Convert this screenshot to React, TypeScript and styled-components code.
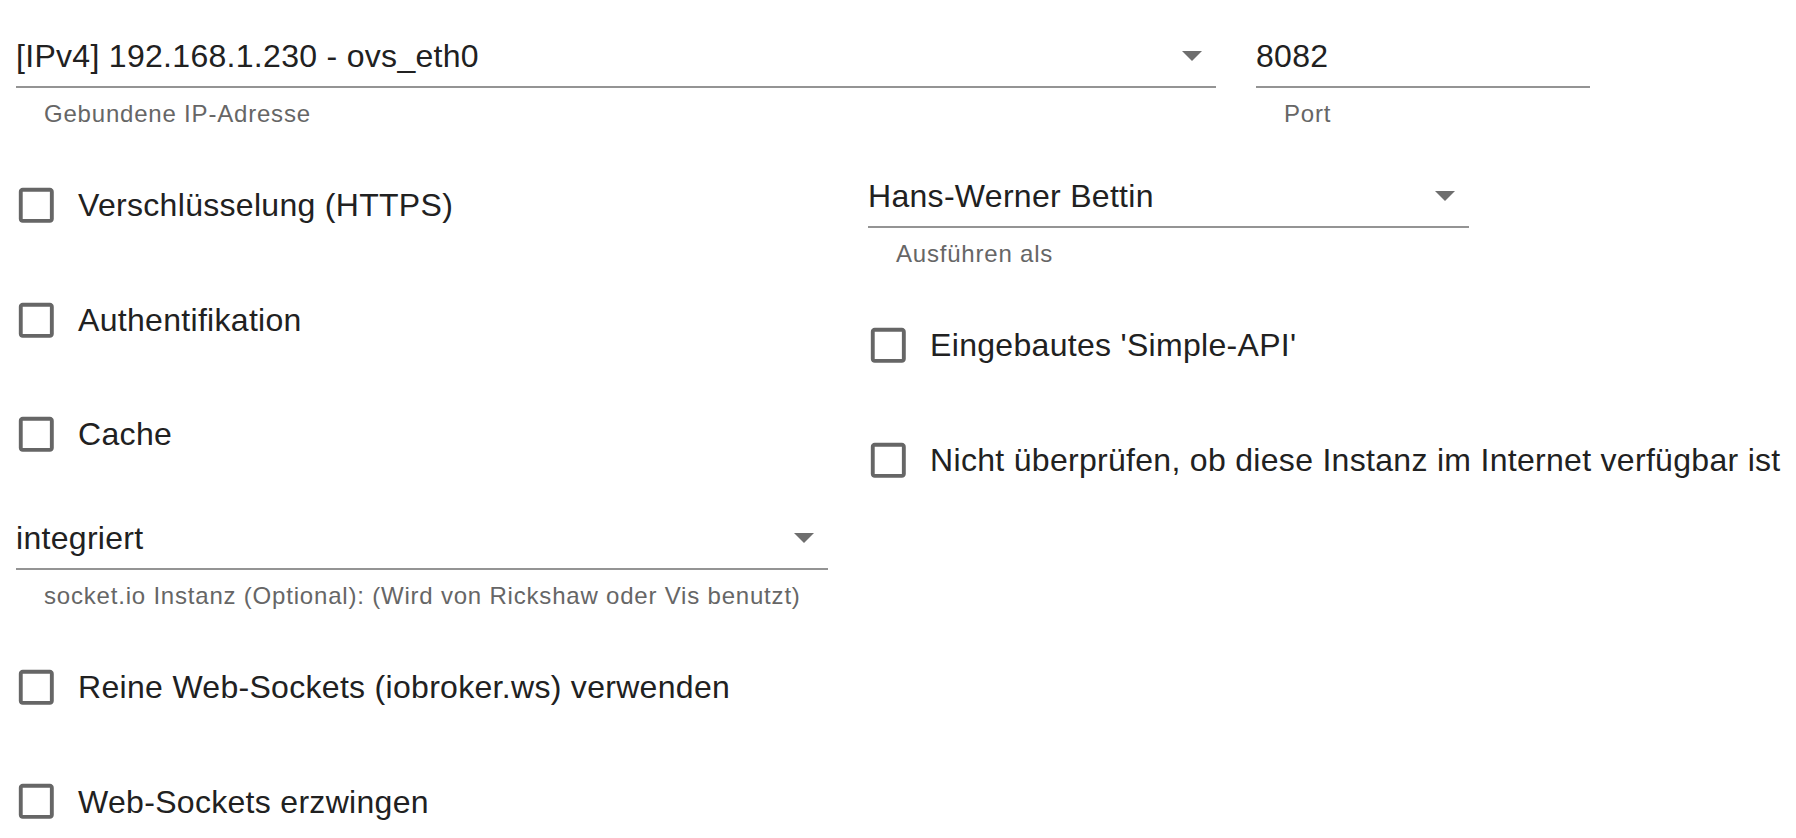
import React from "react";
import styled, { createGlobalStyle } from "styled-components";

const GlobalStyle = createGlobalStyle`
  html, body {
    margin: 0;
    padding: 0;
    background: #ffffff;
  }
  body {
    font-family: "Liberation Sans", Arial, Helvetica, sans-serif;
    color: #212121;
    overflow: hidden;
  }
`;

const Page = styled.div`
  display: flex;
  flex-direction: column;
  padding: 34px 0 0 16px;
  width: 1796px;
  height: 838px;
  box-sizing: border-box;
`;

const TopRow = styled.div`
  display: flex;
  gap: 40px;
`;

const Columns = styled.div`
  display: grid;
  grid-template-columns: 812px 601px;
  column-gap: 40px;
  margin-top: 19px;
`;

const Column = styled.div`
  display: flex;
  flex-direction: column;
`;

const FieldWrap = styled.div<{ $width: number; $mt?: number }>`
  display: flex;
  flex-direction: column;
  width: ${(p) => p.$width}px;
  margin-top: ${(p) => p.$mt ?? 0}px;
`;

const InputBox = styled.div`
  display: flex;
  align-items: center;
  height: 44px;
  padding-bottom: 8px;
  border-bottom: 2px solid #949494;
`;

const Value = styled.div`
  flex: 1;
  font-size: 32px;
  line-height: 44px;
  letter-spacing: 0.3px;
  color: #212121;
  white-space: nowrap;
`;

const ArrowIcon = styled.svg`
  width: 20px;
  height: 10px;
  margin-right: 14px;
  flex: none;
`;

const Helper = styled.div`
  margin: 11px 0 0 28px;
  font-size: 24px;
  line-height: 30px;
  letter-spacing: 0.8px;
  color: #666666;
  white-space: nowrap;
`;

const CheckRow = styled.label<{ $mt?: number }>`
  display: flex;
  align-items: center;
  height: 114.6px;
  margin-top: ${(p) => p.$mt ?? 0}px;
  cursor: pointer;
`;

const BoxIcon = styled.svg`
  width: 46.6px;
  height: 46.6px;
  margin-left: -3.5px;
  flex: none;
`;

const CheckLabel = styled.span`
  margin-left: 19px;
  font-size: 32px;
  line-height: 44px;
  letter-spacing: 0.3px;
  color: #212121;
  white-space: nowrap;
`;

const Arrow = () => (
  <ArrowIcon viewBox="0 0 20 10" aria-hidden>
    <polygon points="0,0 20,0 10,10" fill="#6e6e6e" />
  </ArrowIcon>
);

type FieldProps = {
  width: number;
  value: string;
  helper: string;
  select?: boolean;
  mt?: number;
};

const Field = ({ width, value, helper, select, mt }: FieldProps) => (
  <FieldWrap $width={width} $mt={mt}>
    <InputBox>
      <Value>{value}</Value>
      {select && <Arrow />}
    </InputBox>
    <Helper>{helper}</Helper>
  </FieldWrap>
);

const Check = ({ label, mt }: { label: string; mt?: number }) => (
  <CheckRow $mt={mt}>
    <BoxIcon viewBox="0 0 24 24" aria-hidden>
      <path
        fill="#666666"
        d="M19 5v14H5V5h14m0-2H5c-1.11 0-2 .9-2 2v14c0 1.1.89 2 2 2h14c1.1 0 2-.9 2-2V5c0-1.1-.9-2-2-2z"
      />
    </BoxIcon>
    <CheckLabel>{label}</CheckLabel>
  </CheckRow>
);

export default function App() {
  return (
    <>
      <GlobalStyle />
      <Page>
        <TopRow>
          <Field
            width={1200}
            value="[IPv4] 192.168.1.230 - ovs_eth0"
            helper="Gebundene IP-Adresse"
            select
          />
          <Field width={334} value="8082" helper="Port" />
        </TopRow>
        <Columns>
          <Column>
            <Check label="Verschlüsselung (HTTPS)" />
            <Check label="Authentifikation" />
            <Check label="Cache" />
            <Field
              width={812}
              value="integriert"
              helper="socket.io Instanz (Optional): (Wird von Rickshaw oder Vis benutzt)"
              select
              mt={24.5}
            />
            <Check label="Reine Web-Sockets (iobroker.ws) verwenden" mt={18.4} />
            <Check label="Web-Sockets erzwingen" />
          </Column>
          <Column>
            <Field
              width={601}
              value="Hans-Werner Bettin"
              helper="Ausführen als"
              select
              mt={25.5}
            />
            <Check label="Eingebautes 'Simple-API'" mt={19.5} />
            <Check label="Nicht überprüfen, ob diese Instanz im Internet verfügbar ist" />
          </Column>
        </Columns>
      </Page>
    </>
  );
}
